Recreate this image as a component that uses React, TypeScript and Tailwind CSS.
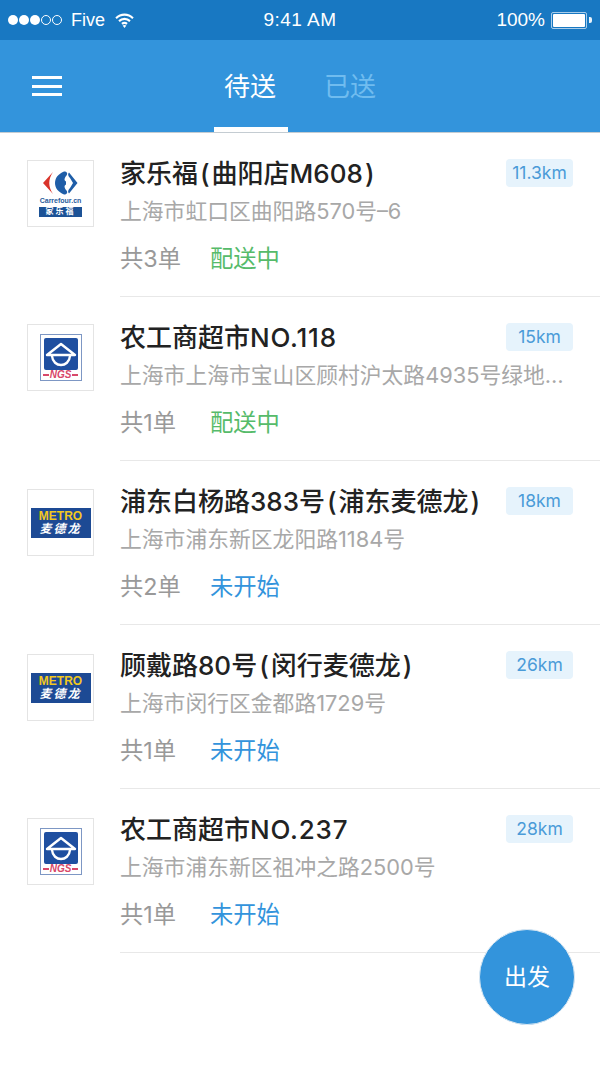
import React from "react";

const FONT = "font-['Inter','Noto_Sans_CJK_SC',sans-serif]";
const STATUS_FONT = "font-['Liberation_Sans',sans-serif]";
const LOGO_FONT = "font-['Liberation_Sans','Noto_Sans_CJK_SC',sans-serif]";

function Carrefour() {
  return (
    <div className={`${LOGO_FONT} flex flex-col items-center`}>
      <svg width="44" height="24" viewBox="0 0 44 24">
        <path d="M14 1 L4 12 L14 23 C9 16 9 8 14 1Z" fill="#d9342b" />
        <path d="M25 0.5 C19 3 16 7 16 12 C16 17 19 21 25 23.5 C28 23.5 29 21.5 27.5 19.5 C25 16.5 25 14.5 27 13.5 L27 10.5 C25 9.5 25 7.5 27.5 4.5 C29 2.5 28 0.5 25 0.5Z" fill="#1f5ea8" />
        <path d="M30 1.5 L38.5 12 L30 22.5 C28.5 21 29 19 31 17 L34 12 L31 7 C29 5 28.5 3 30 1.5Z" fill="#1f5ea8" />
      </svg>
      <span className="mt-[1px] text-[7px] leading-[9px] font-bold text-[#2a5c9c] whitespace-nowrap">Carrefour.cn</span>
      <span className="mt-[2px] w-[43px] h-[10px] bg-[#1c5296] text-white text-[8px] leading-[10px] text-center font-bold tracking-[2px]">家乐福</span>
    </div>
  );
}

function Ngs() {
  return (
    <div className={`${LOGO_FONT} w-[42px] h-[47px] border border-[#7d97c4] px-[3px] pt-[3px] flex flex-col items-center bg-white`}>
      <div className="w-full h-[32px] shrink-0 bg-[#1f4fa0] rounded-[2px] flex items-center justify-center">
        <svg width="34" height="32" viewBox="0 0 34 32" fill="none" stroke="white" strokeWidth="2.4">
          <path d="M17 6 L31 17 L3 17 Z" strokeLinejoin="round" />
          <path d="M8 18 C9 30 25 30 26 18" />
        </svg>
      </div>
      <div className="flex items-center gap-[1px]">
        <span className="w-[6px] h-[2px] bg-[#d8486a]" />
        <span className="text-[10px] leading-[10px] font-bold italic text-[#d8486a]">NGS</span>
        <span className="w-[6px] h-[2px] bg-[#d8486a]" />
      </div>
    </div>
  );
}

function Metro() {
  return (
    <div className={`${LOGO_FONT} w-[60px] h-[30px] bg-[#1d4a94] flex flex-col items-center justify-center`}>
      <span className="text-[12px] leading-[12px] font-bold text-[#f2c81e]">METRO</span>
      <span className="text-[12px] leading-[14px] font-bold text-white italic tracking-[2px]">麦德龙</span>
    </div>
  );
}

type Store = {
  logo: React.ReactNode;
  logoTop: string;
  name: React.ReactNode;
  address: string;
  orders: string;
  status: string;
  active: boolean;
  km: string;
};

function P({ c }: { c: string }) {
  return <span className="mx-[2px]">{c}</span>;
}

function L({ t }: { t: string }) {
  return <span className="tracking-[0.8px]">{t}</span>;
}

const stores: Store[] = [
  { logo: <Carrefour />, logoTop: "mt-[27px]", name: <>家乐福<P c="(" />曲阳店M608<P c=")" /></>, address: "上海市虹口区曲阳路570号–6", orders: "共3单", status: "配送中", active: true, km: "11.3km" },
  { logo: <Ngs />, logoTop: "mt-[27px]", name: <>农工商超市<L t="NO.118" /></>, address: "上海市上海市宝山区顾村沪太路4935号绿地…", orders: "共1单", status: "配送中", active: true, km: "15km" },
  { logo: <Metro />, logoTop: "mt-[28px]", name: <>浦东白杨路383号<P c="(" />浦东麦德龙<P c=")" /></>, address: "上海市浦东新区龙阳路1184号", orders: "共2单", status: "未开始", active: false, km: "18km" },
  { logo: <Metro />, logoTop: "mt-[29px]", name: <>顾戴路80号<P c="(" />闵行麦德龙<P c=")" /></>, address: "上海市闵行区金都路1729号", orders: "共1单", status: "未开始", active: false, km: "26km" },
  { logo: <Ngs />, logoTop: "mt-[29px]", name: <>农工商超市<L t="NO.237" /></>, address: "上海市浦东新区祖冲之路2500号", orders: "共1单", status: "未开始", active: false, km: "28km" },
];

function Row({ s }: { s: Store }) {
  return (
    <div className="flex h-[164px] pl-[27px]">
      <div className={`${s.logoTop} w-[67px] h-[67px] shrink-0 border border-[#e4e4e4] bg-white flex items-center justify-center`}>
        {s.logo}
      </div>
      <div className="ml-[26px] flex-1 min-w-0 border-b border-[#e8e8e8] pt-[21px] relative">
        <div className="text-[26px] leading-[40px] font-medium text-[#222222] whitespace-nowrap">{s.name}</div>
        <div className="text-[21.8px] leading-[30px] mt-[2px] text-[#a8a8a8] whitespace-nowrap">{s.address}</div>
        <div className="flex mt-[17px] text-[23.3px] leading-[32px]">
          <span className="w-[90px] text-[#999999]">{s.orders}</span>
          <span className={s.active ? "text-[#56bb6a]" : "text-[#3394dc]"}>{s.status}</span>
        </div>
        <div className="absolute right-[27px] top-[26px] w-[67px] h-[28px] rounded-[4px] bg-[#e6f3fc] text-[#4a9bd8] text-[17.5px] leading-[28px] text-center">
          {s.km}
        </div>
      </div>
    </div>
  );
}

export default function App() {
  return (
    <div className={`${FONT} relative w-[600px] h-[1067px] bg-white overflow-hidden`}>
      <div className={`${STATUS_FONT} h-[40px] bg-[#1878c2] text-white flex items-center justify-between pl-[8px] pr-[8px]`}>
        <div className="flex items-center w-[200px] text-[18px]">
          <div className="flex gap-[1px]">
            {[0, 1, 2].map((i) => (
              <span key={i} className="w-[10px] h-[10px] rounded-full bg-white" />
            ))}
            {[0, 1].map((i) => (
              <span key={i} className="w-[10px] h-[10px] rounded-full border border-white" />
            ))}
          </div>
          <span className="ml-[9px]">Five</span>
          <svg className="ml-[10px]" width="19" height="15" viewBox="0 0 18 14" fill="none" stroke="white" strokeWidth="2">
            <path d="M1 4.8 C5.5 0.3 12.5 0.3 17 4.8" />
            <path d="M3.8 7.6 C6.8 4.8 11.2 4.8 14.2 7.6" />
            <path d="M6.6 10.2 C8 9 10 9 11.4 10.2" />
            <path d="M9 14 L7.2 11.8 C8.3 11 9.7 11 10.8 11.8Z" fill="white" stroke="none" />
          </svg>
        </div>
        <span className="text-[19px] tracking-[0.5px]">9:41 AM</span>
        <div className="flex items-center justify-end w-[200px] text-[19px]">
          <span>100%</span>
          <span className="ml-[6px] w-[36px] h-[17px] rounded-[2px] border border-[#a9cdea] p-[1px] flex">
            <span className="flex-1 bg-white rounded-[1px]" />
          </span>
          <span className="ml-[2px] w-[3px] h-[6px] bg-white/90 rounded-r-[2px]" />
        </div>
      </div>

      <div className="relative h-[93px] bg-[#3394dc] border-b border-[#c4ccd2] flex justify-center">
        <div className="absolute left-[32px] top-[36px] w-[30px] flex flex-col gap-[5.5px]">
          <span className="h-[3px] bg-white" />
          <span className="h-[3px] bg-white" />
          <span className="h-[3px] bg-white" />
        </div>
        <div className="flex text-[26px] leading-[40px] gap-[48px] h-full">
          <div className="relative w-[52px] pt-[27px] text-center text-white whitespace-nowrap">
            待送
            <span className="absolute left-[-10px] right-[-12px] bottom-0 h-[5px] bg-white" />
          </div>
          <div className="w-[52px] pt-[27px] text-center text-[#70bcef] whitespace-nowrap">已送</div>
        </div>
      </div>

      <div>
        {stores.map((s) => (
          <Row key={s.km} s={s} />
        ))}
      </div>

      <div className="absolute left-[479px] top-[929px] w-[96px] h-[96px] rounded-full bg-[#3394dc] border border-[#dbe8f2] flex items-center justify-center text-white text-[23px]">
        出发
      </div>
    </div>
  );
}
